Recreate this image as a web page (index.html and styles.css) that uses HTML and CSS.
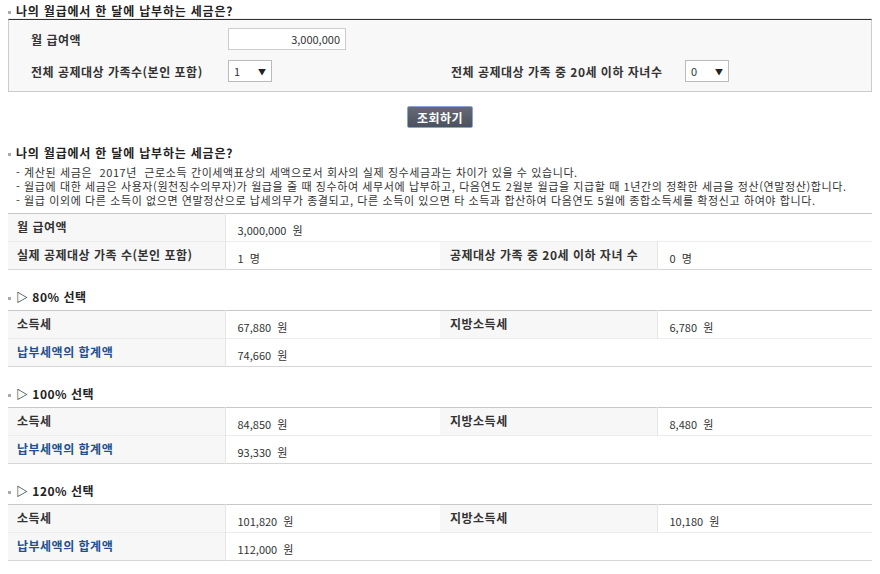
FILE: index.html
```html
<!DOCTYPE html>
<html lang="ko">
<head>
    <meta charset="UTF-8">
    <meta name="viewport" content="width=device-width, initial-scale=1.0">
    <title>월급 세금 계산</title>
    <link rel="stylesheet" href="styles.css">
</head>
<body>

<h3 class="sec-title top-title">나의 월급에서 한 달에 납부하는 세금은?</h3>

<div class="input-box">
    <div class="input-row">
        <label class="field-label">월 급여액</label>
        <input type="text" class="salary-input" value="3,000,000">
    </div>
    <div class="input-row">
        <div class="field">
            <label class="field-label">전체 공제대상 가족수(본인 포함)</label>
            <div class="select-box"><span>1</span><span class="arrow">▼</span></div>
        </div>
        <div class="field">
            <label class="field-label wide">전체 공제대상 가족 중 20세 이하 자녀수</label>
            <div class="select-box"><span>0</span><span class="arrow">▼</span></div>
        </div>
    </div>
</div>

<button class="search-btn">조회하기</button>

<h3 class="sec-title result-title">나의 월급에서 한 달에 납부하는 세금은?</h3>
<ul class="notes">
    <li>- 계산된 세금은&nbsp; 2017년&nbsp; 근로소득 간이세액표상의 세액으로서 회사의 실제 징수세금과는 차이가 있을 수 있습니다.</li>
    <li>- 월급에 대한 세금은 사용자(원천징수의무자)가 월급을 줄 때 징수하여 세무서에 납부하고, 다음연도 2월분 월급을 지급할 때 1년간의 정확한 세금을 정산(연말정산)합니다.</li>
    <li>- 월급 이외에 다른 소득이 없으면 연말정산으로 납세의무가 종결되고, 다른 소득이 있으면 타 소득과 합산하여 다음연도 5월에 종합소득세를 확정신고 하여야 합니다.</li>
</ul>

<table class="result-table">
    <colgroup><col class="c1"><col class="c2"><col class="c3"><col class="c4"></colgroup>
    <tr><th>월 급여액</th><td colspan="3">3,000,000&nbsp; 원</td></tr>
    <tr><th>실제 공제대상 가족 수(본인 포함)</th><td>1&nbsp; 명</td><th>공제대상 가족 중 20세 이하 자녀 수</th><td>0&nbsp; 명</td></tr>
</table>

<h3 class="sec-title option-title">▷ 80% 선택</h3>
<table class="result-table">
    <colgroup><col class="c1"><col class="c2"><col class="c3"><col class="c4"></colgroup>
    <tr><th>소득세</th><td>67,880&nbsp; 원</td><th>지방소득세</th><td>6,780&nbsp; 원</td></tr>
    <tr><th class="total">납부세액의 합계액</th><td colspan="3">74,660&nbsp; 원</td></tr>
</table>

<h3 class="sec-title option-title">▷ 100% 선택</h3>
<table class="result-table">
    <colgroup><col class="c1"><col class="c2"><col class="c3"><col class="c4"></colgroup>
    <tr><th>소득세</th><td>84,850&nbsp; 원</td><th>지방소득세</th><td>8,480&nbsp; 원</td></tr>
    <tr><th class="total">납부세액의 합계액</th><td colspan="3">93,330&nbsp; 원</td></tr>
</table>

<h3 class="sec-title option-title">▷ 120% 선택</h3>
<table class="result-table">
    <colgroup><col class="c1"><col class="c2"><col class="c3"><col class="c4"></colgroup>
    <tr><th>소득세</th><td>101,820&nbsp; 원</td><th>지방소득세</th><td>10,180&nbsp; 원</td></tr>
    <tr><th class="total">납부세액의 합계액</th><td colspan="3">112,000&nbsp; 원</td></tr>
</table>

</body>
</html>
```

FILE: styles.css
```css
body {
    font-family: "Noto Sans CJK KR", "Noto Sans", sans-serif;
    font-size: 12px;
    color: #333;
    background-color: #fff;
    margin: 4px 8px 0;
    padding: 0;
}
.sec-title {
    margin: 0;
    font-size: 12px;
    line-height: 14px;
    font-weight: bold;
    color: #222;
    letter-spacing: 0.8px;
}
.sec-title::before {
    content: "";
    display: inline-block;
    width: 3px;
    height: 3px;
    background-color: #aaa;
    margin-right: 5px;
    vertical-align: middle;
}
.top-title {
    border-bottom: 1px solid #eee;
}
.input-box {
    border: 1px solid #ccc;
    border-top: 1px solid #333;
    background-color: #f8f8f8;
    padding: 8px 0 9px 22px;
}
.input-row {
    display: flex;
    align-items: center;
    height: 22px;
}
.input-row + .input-row {
    margin-top: 10px;
}
.field {
    display: flex;
    align-items: center;
    width: 420px;
}
.field-label {
    width: 197px;
    font-weight: bold;
    color: #333;
    letter-spacing: 0.5px;
}
.field-label.wide {
    width: 234px;
}
.salary-input {
    box-sizing: border-box;
    width: 118px;
    height: 22px;
    border: 1px solid #ccc;
    padding: 0 5px;
    text-align: right;
    font-family: inherit;
    font-size: 11px;
    color: #333;
    background-color: #fff;
}
.select-box {
    box-sizing: border-box;
    display: flex;
    align-items: center;
    justify-content: space-between;
    width: 44px;
    height: 22px;
    border: 1px solid #bbb;
    background-color: #fff;
    padding: 0 5px;
    font-size: 11px;
}
.select-box .arrow {
    font-size: 8px;
    color: #222;
}
.search-btn {
    display: block;
    margin: 14px auto 0;
    width: 66px;
    height: 22px;
    padding: 0;
    border: 1px solid #8aa4d6;
    border-radius: 2px;
    background: linear-gradient(#646a77, #4c525d);
    color: #fff;
    font-family: inherit;
    font-size: 12px;
    font-weight: bold;
    letter-spacing: 0.5px;
}
.result-title {
    margin-top: 18px;
}
.notes {
    list-style: none;
    margin: 5px 0 6px;
    padding: 0 0 0 8px;
    font-size: 11px;
    line-height: 14px;
    color: #333;
    letter-spacing: 0.6px;
}
.result-table {
    width: 100%;
    table-layout: fixed;
    border-collapse: collapse;
    border-top: 1px solid #c8c8c8;
    border-bottom: 1px solid #d6d6d6;
}
.result-table col.c1, .result-table col.c3 {
    width: 217px;
}
.result-table tr {
    height: 28px;
}
.result-table tr + tr th, .result-table tr + tr td {
    border-top: 1px solid #ececec;
}
.result-table th {
    background-color: #f7f7f7;
    border-right: 1px solid #e6e6e6;
    text-align: left;
    font-weight: bold;
    color: #333;
    line-height: 14px;
    letter-spacing: 0.5px;
    padding: 0 0 2px 9px;
}
.result-table th + td + th {
    padding-left: 10px;
}
.result-table th.total {
    color: #234f8e;
}
.result-table td {
    font-size: 11px;
    line-height: 14px;
    color: #333;
    padding: 4px 0 0 12px;
}
.option-title {
    margin: 20px 0 6px;
    letter-spacing: 0.5px;
}
```
